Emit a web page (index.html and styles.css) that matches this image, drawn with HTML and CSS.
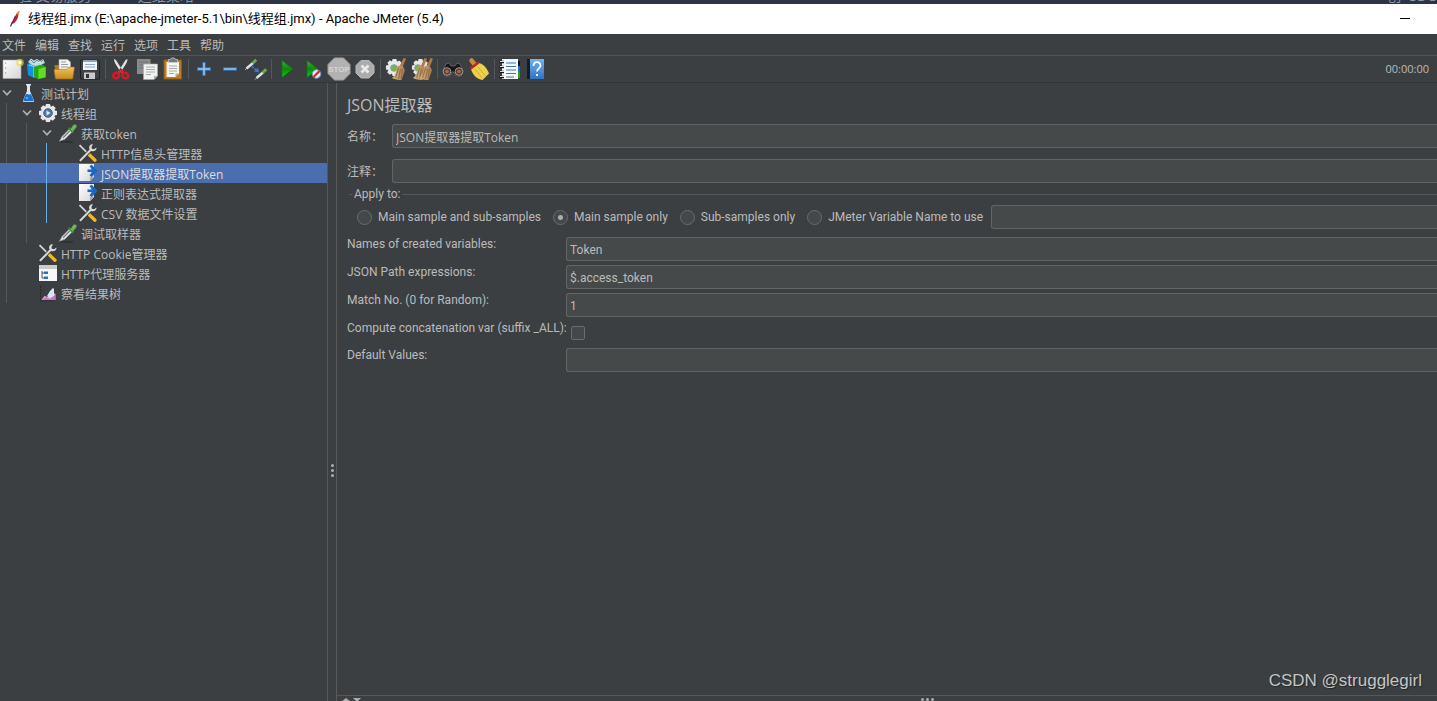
FILE: index.html
```html
<!DOCTYPE html>
<html lang="zh-CN">
<head>
<meta charset="utf-8">
<title>线程组.jmx - Apache JMeter (5.4)</title>
<link rel="stylesheet" href="styles.css">
</head>
<body>
<svg class="defs" aria-hidden="true">
  <defs>
    <linearGradient id="paper" x1="0" y1="0" x2="1" y2="1"><stop offset="0" stop-color="#fff"/><stop offset="1" stop-color="#d4d4d4"/></linearGradient>
    <linearGradient id="green" x1="0" y1="0" x2="0" y2="1"><stop offset="0" stop-color="#3fae3f"/><stop offset=".5" stop-color="#0a8a0a"/><stop offset="1" stop-color="#12d012"/></linearGradient>
    <linearGradient id="gold" x1="0" y1="0" x2="0" y2="1"><stop offset="0" stop-color="#f3c55e"/><stop offset="1" stop-color="#c98a1a"/></linearGradient>
    <linearGradient id="straw" x1="0" y1="0" x2="1" y2="0"><stop offset="0" stop-color="#d9b98a"/><stop offset="1" stop-color="#a4774a"/></linearGradient>
    <linearGradient id="help" x1="0" y1="0" x2="0" y2="1"><stop offset="0" stop-color="#6fb2f2"/><stop offset="1" stop-color="#3373c4"/></linearGradient>
    <symbol id="chevron" viewBox="0 0 10 10"><path d="M1 2.5 5 6.7 9 2.5" fill="none" stroke="#adadad" stroke-width="1.7"/></symbol>
    <symbol id="dropper" viewBox="0 0 20 20"><path d="M2 19h13" stroke="#2c2e2f" stroke-width="1.5"/><path d="M1.5 18.2 4 13.6 11.5 6l2.8 2.8-7.5 7.4z" fill="#e4e6e6" stroke="#999" stroke-width=".8"/><path d="M5 14.8 11.8 8" stroke="#777" stroke-width="1.2"/><path d="m10.8 4.8 4.6 4.6" stroke="#3a8a35" stroke-width="2.4"/><path d="m12.5 6.5 2.2-3.8c1-1.8 4.5-2 3.8 1-.3 1.200-2 2.500-3.700 4.800z" fill="#71b35a"/></symbol>
    <symbol id="tools" viewBox="0 0 20 20"><path d="m1.500 2.200 8.800 8.600" stroke="#d5d7d8" stroke-width="1.700"/><path d="m11 11.500 6 5.700" stroke="#f5b916" stroke-width="3.300" stroke-linecap="round"/><path d="M2.500 17.300 13 6.500" stroke="#303234" stroke-width="3.600" stroke-linecap="round"/><path d="M2.500 17.300 13 6.500" stroke="#d2d4d5" stroke-width="2.200" stroke-linecap="round"/><path d="M15 1.200c-3-.2-4.500 2.200-3.600 4.700l2.200 2.300c2.600.7 5-.8 4.900-3.700L16 6.300l-2.200-.5-.3-2z" fill="#d9dbdc"/></symbol>
    <symbol id="extract" viewBox="0 0 20 20"><path d="M1 1h15v13l-4 4H1z" fill="url(#paper)"/><path d="M12 18v-4h4z" fill="#a8a8a8"/><path d="M9.500 6.500h4.300L11.500 3l2.300-1.200L19.500 8l-5.700 6-2.300-1.500 2.300-3.500H9.500z" fill="#1769c8"/></symbol>
    <symbol id="gear" viewBox="0 0 20 20"><g fill="#e6e8ea"><circle cx="10" cy="10" r="7"/><path d="M8 1h4l1 4H7zM8 19h4l1-4H7zM1 8v4l4 1V7zM19 8v4l-4 1V7z"/><path d="m2.500 5 2.700-2.700 3.500 2.200-4 4zM17.500 15l-2.700 2.700-3.500-2.200 4-4zM15 2.500 17.700 5l-2.200 3.700-4-4zM5 17.500 2.300 15l2.200-3.700 4 4z"/></g></symbol>
    <g id="broom"><path d="m19.500 1 2.500.8-3.500 8.500-2.800-1z" fill="#b07a45"/><path d="m14 8.500 5.500 1.700 1.500 3-3.500 9.800c-3.500 0-6.500-.5-9.500-2 3-2 4.500-6 4.500-9.500z" fill="url(#straw)"/><path d="m14.500 11-3 10m5-9-2 10m4-10-1.400 10" stroke="#7d5a36" stroke-width=".7"/></g>
    <symbol id="play" viewBox="0 0 24 24"><path d="M7 3.500 18 12 7 20.500z" fill="url(#green)" stroke="#0a720a" stroke-width=".7"/></symbol>
  </defs>
</svg>

<div class="backdrop" aria-hidden="true"><span class="backdrop-a">验 交易服务</span><span class="backdrop-b">运维策略</span><span class="backdrop-c">创</span><span class="backdrop-d">SDC</span></div>

<header class="titlebar">
  <svg class="app-icon" viewBox="0 0 16 18"><path d="M13.500 1c-2 1-4.500 4.500-5.500 8l-2 4 2 .5c2.500-3 4-5 4-7z" fill="#c2202e"/><path d="M13.500 1c-1 0-2.500 1.500-3.500 3l2.500 1z" fill="#e58b25"/><path d="M9.500 6 6 13.500" stroke="#7b2160" stroke-width="1.300"/><path d="m6.500 12-2 4.500" stroke="#55213c" stroke-width="1.200"/></svg>
  <h1 class="title">线程组.jmx (E:\apache-jmeter-5.1\bin\线程组.jmx) - Apache JMeter (5.4)</h1>
  <button class="minimize" aria-label="最小化"></button>
</header>

<nav class="menubar">
  <button>文件</button><button>编辑</button><button>查找</button><button>运行</button><button>选项</button><button>工具</button><button>帮助</button>
</nav>

<div class="toolbar" role="toolbar">
  <button aria-label="新建"><svg viewBox="0 0 24 24"><path d="M3 3h18v18.500H3z" fill="url(#paper)" stroke="#aaa" stroke-width=".6"/><path d="M5 6h1.200M5 11h1.200M5 16h1.200" stroke="#888"/><circle cx="20" cy="5.500" r="3.800" fill="#e7d93c" opacity=".65"/><circle cx="20" cy="5.500" r="1.800" fill="#fffbd0"/></svg></button>
  <button aria-label="模板"><svg viewBox="0 0 24 24"><path d="m1 7 7-2 3 2v13l-3 1-6-3z" fill="#168fe0"/><path d="m3 8 5 1.500V20" fill="none" stroke="#a7dbff"/><path d="M2 5 5 1.500l3 2L11 2l3 2 3-2 2 4-7 3-6-1z" fill="#b8dbe0"/><path d="m5 3 3 3 3-3 3 3 3-3" stroke="#668d96" fill="none"/><path d="m8 10 8-2.500L20 10v10.500l-8 1.800-4-3z" fill="#25a911"/><path d="m12.500 12 7-2v10l-7 2z" fill="#66db26"/><path d="M9 9.500V7l2-1.500h4V8" fill="none" stroke="#d9ecd9"/></svg></button>
  <button aria-label="打开"><svg viewBox="0 0 24 24"><path d="M2.500 8h4l1.500 2h13v11H4z" fill="#b57816"/><path d="M7 2.500h8.500L18.500 5v10H7z" fill="#f4f4f4" stroke="#aaa" stroke-width=".6"/><path d="M9 5h5M9 7.500h7M9 10h7" stroke="#999"/><path d="m2 12.500 13-.2 2-2.300h5.500l-1.800 12H3.500z" fill="url(#gold)" stroke="#a66f16" stroke-width=".6"/></svg></button>
  <button aria-label="保存"><svg viewBox="0 0 24 24"><path d="M3 3h17l1.500 2v17H2.500V4z" fill="#3f4142" stroke="#202224"/><path d="M5 3h14v10H5z" fill="#f2f6fa"/><path d="M5 3h14v2H5z" fill="#81a8ca"/><path d="M7 7.500h10M7 10h10" stroke="#91a7bb"/><path d="M6 15.500h11V22H6z" fill="#c7c9ca"/><path d="M8 17h3v4H8z" fill="#333"/></svg></button>
  <i class="sep"></i>
  <button aria-label="剪切"><svg viewBox="0 0 24 24"><path d="M5 2c0 3 2 6 5.500 11l2.500 3 1.500-1L7 3zM18.500 2c0 3-2 6-5.500 11l-2.500 3L9 15l7.500-12z" fill="#dfe1e2"/><g fill="none" stroke="#d7191f" stroke-width="2.600"><ellipse cx="7.200" cy="18.500" rx="3" ry="2.700" transform="rotate(-35 7.200 18.500)"/><ellipse cx="16.300" cy="18.500" rx="3" ry="2.700" transform="rotate(35 16.300 18.500)"/></g><path d="m9.300 15.800 2.500-3 2.500 3" fill="none" stroke="#d7191f" stroke-width="2"/></svg></button>
  <button aria-label="复制"><svg viewBox="0 0 24 24"><path d="M2 2h13.500v15H2z" fill="#898b8c"/><path d="M4 5h9M4 8h9M4 11h6" stroke="#6f7172"/><path d="M8.500 7h14v12l-3.500 3.500H8.500z" fill="#f0f1f1" stroke="#aaa" stroke-width=".6"/><path d="M11 10h9m-9 2.500h9M11 15h9m-9 2.500h5" stroke="#a9abac"/><path d="M19 22.500V19h3.500z" fill="#aaa"/></svg></button>
  <button aria-label="粘贴"><svg viewBox="0 0 24 24"><path d="M3 3h17.500v19H3z" fill="#c47b17" stroke="#95590d"/><path d="M5.500 5h12.500v11.500L14.500 20h-9z" fill="#f6f6f6"/><path d="M8 9h8m-8 2.500h8M8 14h8m-8 2.500h5" stroke="#aaa"/><path d="M7.500 2.500h2L10.500 1h3l1 1.500h2v3h-9z" fill="#777a7b" stroke="#cfd1d1" stroke-width=".7"/><path d="M14.500 20v-3.500H18z" fill="#aaa"/></svg></button>
  <i class="sep"></i>
  <button aria-label="展开"><svg viewBox="0 0 24 24"><path d="M12 5v14M5 12h14" stroke="#3775bd" stroke-width="3.400"/><path d="M12 6v12M6 12h12" stroke="#9ac7f2" stroke-width="1.500"/></svg></button>
  <button aria-label="折叠"><svg viewBox="0 0 24 24"><path d="M5 12h14" stroke="#3775bd" stroke-width="3.400"/><path d="M6 12h12" stroke="#9ac7f2" stroke-width="1.500"/></svg></button>
  <button aria-label="切换"><svg viewBox="0 0 24 24"><g id="mini"><path d="m2.500 11.500 6.500-5.500" stroke="#dfe3e4" stroke-width="2.400"/><path d="m8.700 6.300 3.500-3.500" stroke="#6ca855" stroke-width="3"/><path d="m1 13 2-2" stroke="#bbb"/></g><use href="#mini" x="10" y="9.500"/><path d="m8 9.500 4 3.500" stroke="#2f7be4" stroke-dasharray="2 1" stroke-width="1.500"/><path d="m15 15.500-1-5-4 4z" fill="#2f7be4"/></svg></button>
  <i class="sep"></i>
  <button aria-label="启动"><svg><use href="#play"/></svg></button>
  <button aria-label="不停顿开始"><svg viewBox="0 0 24 24"><path d="M6 3.500 17 12 6 20.500z" fill="url(#green)" stroke="#0a720a" stroke-width=".7"/><circle cx="15.500" cy="17" r="4.300" fill="#dce9f8" stroke="#6d94c2"/><path d="m12.500 20 6-6" stroke="#df2920" stroke-width="2.300"/></svg></button>
  <button aria-label="停止" disabled><svg viewBox="0 0 24 24"><path d="M7.500 1h9L23 7.500v9L16.500 23h-9L1 16.500v-9z" fill="#b2b2b2" stroke="#a1a1a1"/><text class="stop-text" x="12" y="15" text-anchor="middle" fill="#d4d4d4">STOP</text></svg></button>
  <button aria-label="关闭" disabled><svg viewBox="0 0 24 24"><path d="M8 3.500h8l5 5v7.500l-5 5H8l-5-5V8.500z" fill="#acacac" stroke="#bababa"/><path d="m8.500 8.500 7 7m0-7-7 7" stroke="#e9e9e9" stroke-width="2.800"/></svg></button>
  <i class="sep"></i>
  <button aria-label="清除"><svg viewBox="0 0 24 24"><use href="#gear" x="1" y="1" width="19" height="19"/><circle cx="10" cy="11" r="3.300" fill="#65bd45" stroke="#999"/><use href="#broom"/></svg></button>
  <button aria-label="清除全部"><svg viewBox="0 0 24 24"><use href="#gear" x="1" y="1" width="19" height="19"/><circle cx="8" cy="11" r="3.300" fill="#65bd45" stroke="#999"/><use href="#broom" x="-5"/><use href="#broom" x="1"/></svg></button>
  <i class="sep"></i>
  <button aria-label="查找"><svg viewBox="0 0 24 24"><path d="m2 14 3-7 3-1 2 3h4l2-3 3 1 3 7-2 5h-5l-2-4h-2l-2 4H4z" fill="#171718" stroke="#77736f" stroke-width=".7"/><circle cx="6" cy="14.500" r="3.800" fill="#49413b" stroke="#a79a90"/><circle cx="18" cy="14.500" r="3.800" fill="#49413b" stroke="#a79a90"/><circle cx="6" cy="14.500" r="1.800" fill="#b76743"/><circle cx="18" cy="14.500" r="1.800" fill="#b76743"/></svg></button>
  <button aria-label="重置查找"><svg viewBox="0 0 24 24"><path d="m4.500 3.500 4 5" stroke="#c98a3c" stroke-width="4.500" stroke-linecap="round"/><path d="m4 12 8-6c4 1 8 5 10 10.500l-6.500 6.500C10 22 5.500 18 4 12z" fill="#efd04a"/><path d="m3.500 11.500 8-6" stroke="#c02526" stroke-width="2.600"/><path d="m8 12 7 9m-4-11 7.500 9" stroke="#c9a52a" stroke-width=".8"/></svg></button>
  <i class="sep"></i>
  <button aria-label="函数助手"><svg viewBox="0 0 24 24"><path d="M4 2h16v20H4z" fill="#f8f8f8"/><path d="M20 4h2v6h-2z" fill="#151515"/><path d="M20 9h2v6h-2z" fill="#1d68da"/><path d="M20 15h2v6h-2z" fill="#14a830"/><path d="M8 6h10M8 9.500h10M8 13h10M8 16.500h10M8 20h8" stroke="#3477c7" stroke-width="1.200"/><path d="M1.500 5H6M1.500 10H6M1.500 15H6M1.500 20H6" stroke="#17191a" stroke-width="2.400"/><path d="M2 4.500h4m-4 5h4m-4 5h4m-4 5h4" stroke="#ddd"/></svg></button>
  <button aria-label="帮助"><svg viewBox="0 0 24 24"><path d="M3 2h17v20H3z" fill="url(#help)"/><path d="M3 2h3v20H3z" fill="#121c2c"/><path d="M9.500 9c0-5 7-5 7-.5 0 3-3.500 3-3.500 6" fill="none" stroke="#fff" stroke-width="1.700"/><path d="M12 17h2v2h-2z" fill="#fff"/></svg></button>
  <time class="timer">00:00:00</time>
</div>

<main class="workspace">
  <aside class="sidebar">
    <ul class="tree" role="tree">
      <li><div class="row l0"><svg class="chev"><use href="#chevron"/></svg><svg class="ico" viewBox="0 0 20 20"><path d="M8 1h5v1l-1 1v5l4 9.500c.3 1-.5 1.500-1.500 1.500h-8c-1 0-1.800-.5-1.500-1.500L9 8V3L8 2z" fill="#dfe8f1"/><path d="m8 11-2.500 6c-.4 1 0 1.300 1 1.300h8c1 0 1.400-.3 1-1.300L13 11c-2 1.500-3-.5-5 0z" fill="#1c6fd4"/><circle cx="9" cy="15" r="1" fill="#75b8ff"/></svg><span>测试计划</span></div>
        <ul class="g0">
          <li><div class="row l1"><svg class="chev"><use href="#chevron"/></svg><svg class="ico" viewBox="0 0 20 20"><use href="#gear"/><circle cx="10" cy="10" r="4.300" fill="#54799f" stroke="#3d5c80"/><path d="m8.500 7.500 4 2.500-4 2.500z" fill="#d9ebff"/></svg><span>线程组</span></div>
            <ul class="g1">
              <li><div class="row l2"><svg class="chev"><use href="#chevron"/></svg><svg class="ico"><use href="#dropper"/></svg><span>获取token</span></div>
                <ul class="g2">
                  <li class="row l3"><svg class="ico"><use href="#tools"/></svg><span>HTTP信息头管理器</span></li>
                  <li class="row l3 selected"><svg class="ico"><use href="#extract"/></svg><span>JSON提取器提取Token</span></li>
                  <li class="row l3"><svg class="ico"><use href="#extract"/></svg><span>正则表达式提取器</span></li>
                  <li class="row l3"><svg class="ico"><use href="#tools"/></svg><span>CSV 数据文件设置</span></li>
                </ul>
              </li>
              <li class="row l2 leaf"><svg class="ico"><use href="#dropper"/></svg><span>调试取样器</span></li>
            </ul>
          </li>
          <li class="row l1 leaf"><svg class="ico"><use href="#tools"/></svg><span>HTTP Cookie管理器</span></li>
          <li class="row l1 leaf"><svg class="ico" viewBox="0 0 20 20"><path d="M1 2h18v16H1z" fill="#f5f7f9"/><path d="M1 2h18v4H1z" fill="#c9cbcd"/><path d="M4 8v7h3M4 10h3" fill="none" stroke="#555"/><path d="M6 8.500h4V11H6zM6 13.500h4V16H6z" fill="#276fc2"/></svg><span>HTTP代理服务器</span></li>
          <li class="row l1 leaf"><svg class="ico" viewBox="0 0 20 20"><path d="M2.500 3v15h15" fill="none" stroke="#26282a" stroke-dasharray="2 1"/><path d="m3.500 17 3-4 3 1 3-6 5 3v6z" fill="#eaa8df"/><path d="m9 13 3-5 3-3 1 1v7l-4 2z" fill="#d2e7fb"/><path d="m4 17 4-3 4 2 5-4v5z" fill="#cf70c2"/></svg><span>察看结果树</span></li>
        </ul>
      </li>
    </ul>
  </aside>
  <div class="splitter" role="separator"><i></i><i></i><i></i></div>
  <section class="content">
    <form class="panel">
      <h2 class="heading">JSON提取器</h2>
      <div class="line"><label for="name">名称：</label><input id="name" type="text" value="JSON提取器提取Token"></div>
      <div class="line"><label for="comment">注释：</label><input id="comment" type="text"></div>
      <fieldset class="apply">
        <legend>Apply to:</legend>
        <div class="scope">
          <label><input type="radio" name="scope">Main sample and sub-samples</label>
          <label><input type="radio" name="scope" checked>Main sample only</label>
          <label><input type="radio" name="scope">Sub-samples only</label>
          <label><input type="radio" name="scope">JMeter Variable Name to use</label>
          <input type="text" aria-label="JMeter Variable Name to use">
        </div>
      </fieldset>
      <div class="params">
        <label for="vars">Names of created variables:</label><input id="vars" type="text" value="Token">
        <label for="path">JSON Path expressions:</label><input id="path" type="text" value="$.access_token">
        <label for="match">Match No. (0 for Random):</label><input id="match" type="text" value="1">
        <label for="concat">Compute concatenation var (suffix _ALL):</label><input id="concat" type="checkbox">
        <label for="defaults">Default Values:</label><input id="defaults" type="text">
      </div>
    </form>
    <div class="watermark">CSDN @strugglegirl</div>
    <div class="bottombar"><svg class="arrows" viewBox="0 0 20 5"><path d="M0 5 4 2l4 3zM11 2h8l-4 4z" fill="#adadad"/></svg><span class="grip"><i></i><i></i><i></i></span></div>
  </section>
</main>
</body>
</html>
```
FILE: styles.css
```css
* { box-sizing: border-box; }

body {
  margin: 0;
  height: 100vh;
  display: flex;
  flex-direction: column;
  overflow: hidden;
  background: #3c3f41;
  color: #bbbbbb;
  font: 12px/16px "Open Sans", "Noto Sans CJK SC", sans-serif;
}

button, input { font: inherit; color: inherit; }
button { border: 0; padding: 0; background: none; }
ul { list-style: none; margin: 0; padding: 0; }
h1, h2 { margin: 0; font-weight: 400; }
.defs { position: absolute; width: 0; height: 0; }

.backdrop {
  flex: none;
  height: 4px;
  overflow: hidden;
  display: flex;
  align-items: flex-end;
  background: #2d3446;
  color: #8f96a6;
  font-size: 14px;
  line-height: 16px;
}
.backdrop-a { margin-left: 18px; }
.backdrop-b { margin-left: 46px; }
.backdrop-c { margin-left: auto; }
.backdrop-d { margin: 0 1px 0 8px; }

.titlebar {
  flex: none;
  height: 30px;
  padding: 0 27px 0 6px;
  display: flex;
  align-items: center;
  gap: 6px;
  background: #fff;
  color: #000;
}
.app-icon { width: 16px; height: 18px; }
.title { font-family: Roboto, "Noto Sans CJK SC", sans-serif; font-size: 13px; white-space: nowrap; }
.minimize { width: 10px; height: 12px; margin-left: auto; border-bottom: 1px solid #000; margin-bottom: 12px; }

.menubar {
  flex: none;
  height: 22px;
  padding: 2px 0 0 2px;
  display: flex;
  align-items: center;
  gap: 9px;
  border-bottom: 1px solid #515557;
}

.toolbar {
  flex: none;
  height: 27px;
  padding-right: 8px;
  display: flex;
  align-items: center;
  gap: 2px;
  border-bottom: 1px solid #323537;
}
.toolbar button { width: 24px; height: 24px; }
.toolbar svg { display: block; width: 24px; height: 24px; }
.stop-text { font: 700 8px "Liberation Sans", sans-serif; }
.sep { width: 1px; height: 20px; margin: 0 1px; background: #55585a; }
.timer { margin-left: auto; font-size: 11px; }

.workspace { flex: 1; min-height: 0; display: flex; }
.sidebar { flex: 0 0 328px; border-right: 1px solid #555759; overflow: hidden; }

.row { height: 20px; display: flex; align-items: center; white-space: nowrap; }
.row span { padding: 3px 0 0 3px; }
.chev { width: 10px; height: 10px; margin-right: 6px; }
.ico { width: 20px; height: 20px; }
.l0 { padding-left: 2px; }
.l1 { padding-left: 22px; }
.l2 { padding-left: 42px; }
.l3 { padding-left: 78px; }
.l1.leaf { padding-left: 38px; }
.l2.leaf { padding-left: 58px; }
.selected { background: #4b6eaf; color: #dddddd; }

.g0, .g1, .g2 { position: relative; }
.g0::before, .g1::before, .g2::before {
  content: "";
  position: absolute;
  top: 0;
  bottom: 0;
  width: 1px;
  background: #54585a;
}
.g0::before { left: 6px; }
.g1::before { left: 26px; }
.g2::before { left: 46px; background: #6aaeea; }

.splitter {
  flex: 0 0 9px;
  display: flex;
  flex-direction: column;
  align-items: center;
  justify-content: center;
  gap: 2px;
  padding-top: 156px;
  border-right: 1px solid #5b5a58;
}
.splitter i, .grip i { width: 3px; height: 3px; border-radius: 50%; background: #adadad; }

.content { flex: 1; min-width: 0; position: relative; display: flex; flex-direction: column; }
.panel {
  flex: 1;
  min-height: 0;
  padding: 10px 0 0 10px;
  font-family: Roboto, "Noto Sans CJK SC", sans-serif;
}
.heading { font: 16px/24px "Open Sans", "Noto Sans CJK SC", sans-serif; margin-bottom: 7px; }

input[type="text"] {
  min-width: 0;
  height: 24px;
  padding: 1px 3px 0;
  background: #45494a;
  border: 1px solid #646464;
  border-right: 0;
  border-radius: 3px 0 0 3px;
  outline: 0;
}

.line { display: flex; align-items: center; margin-bottom: 11px; font-family: "Open Sans", "Noto Sans CJK SC", sans-serif; }
.line label { width: 45px; padding-top: 2px; }
.line input { flex: 1; }

.apply {
  min-width: 0;
  margin: -10px 0 7px 2px;
  padding: 0;
  border: 0 solid #55585a;
  border-top-width: 1px;
}
.apply legend { margin-left: 3px; padding: 0 2px; line-height: 20px; }
.scope { display: flex; align-items: center; padding: 1px 0 0 8px; }
.scope label { display: flex; align-items: center; gap: 6px; margin-right: 12px; white-space: nowrap; }
.scope label:last-of-type { margin-right: 8px; }
.scope input[type="text"] { flex: 1; }

input[type="radio"], input[type="checkbox"] {
  appearance: none;
  margin: 0;
  background: #43494a;
  border: 1px solid #6b6b6b;
}
input[type="radio"] { width: 15px; height: 15px; border-radius: 50%; }
input[type="radio"]:checked { background: radial-gradient(circle, #adadad 2px, #43494a 3px); }
input[type="checkbox"] { width: 14px; height: 14px; margin: 5px 5px 4px; border-radius: 2px; }

.params { display: grid; grid-template-columns: 217px 1fr; column-gap: 2px; row-gap: 4px; margin-top: 8px; }
.params label { white-space: nowrap; line-height: 14px; }

.watermark {
  position: absolute;
  right: 15px;
  bottom: 9px;
  font: 17px/22px "Liberation Sans", sans-serif;
  color: #c4c5c6;
  text-shadow: 1px 1px 1px #222426;
}

.bottombar {
  flex: none;
  height: 6px;
  padding-left: 5px;
  display: flex;
  align-items: flex-end;
  overflow: hidden;
  border-top: 1px solid #55585a;
}
.arrows { width: 20px; height: 5px; }
.grip { flex: 1; display: flex; justify-content: center; gap: 2px; padding-left: 56px; }
```
